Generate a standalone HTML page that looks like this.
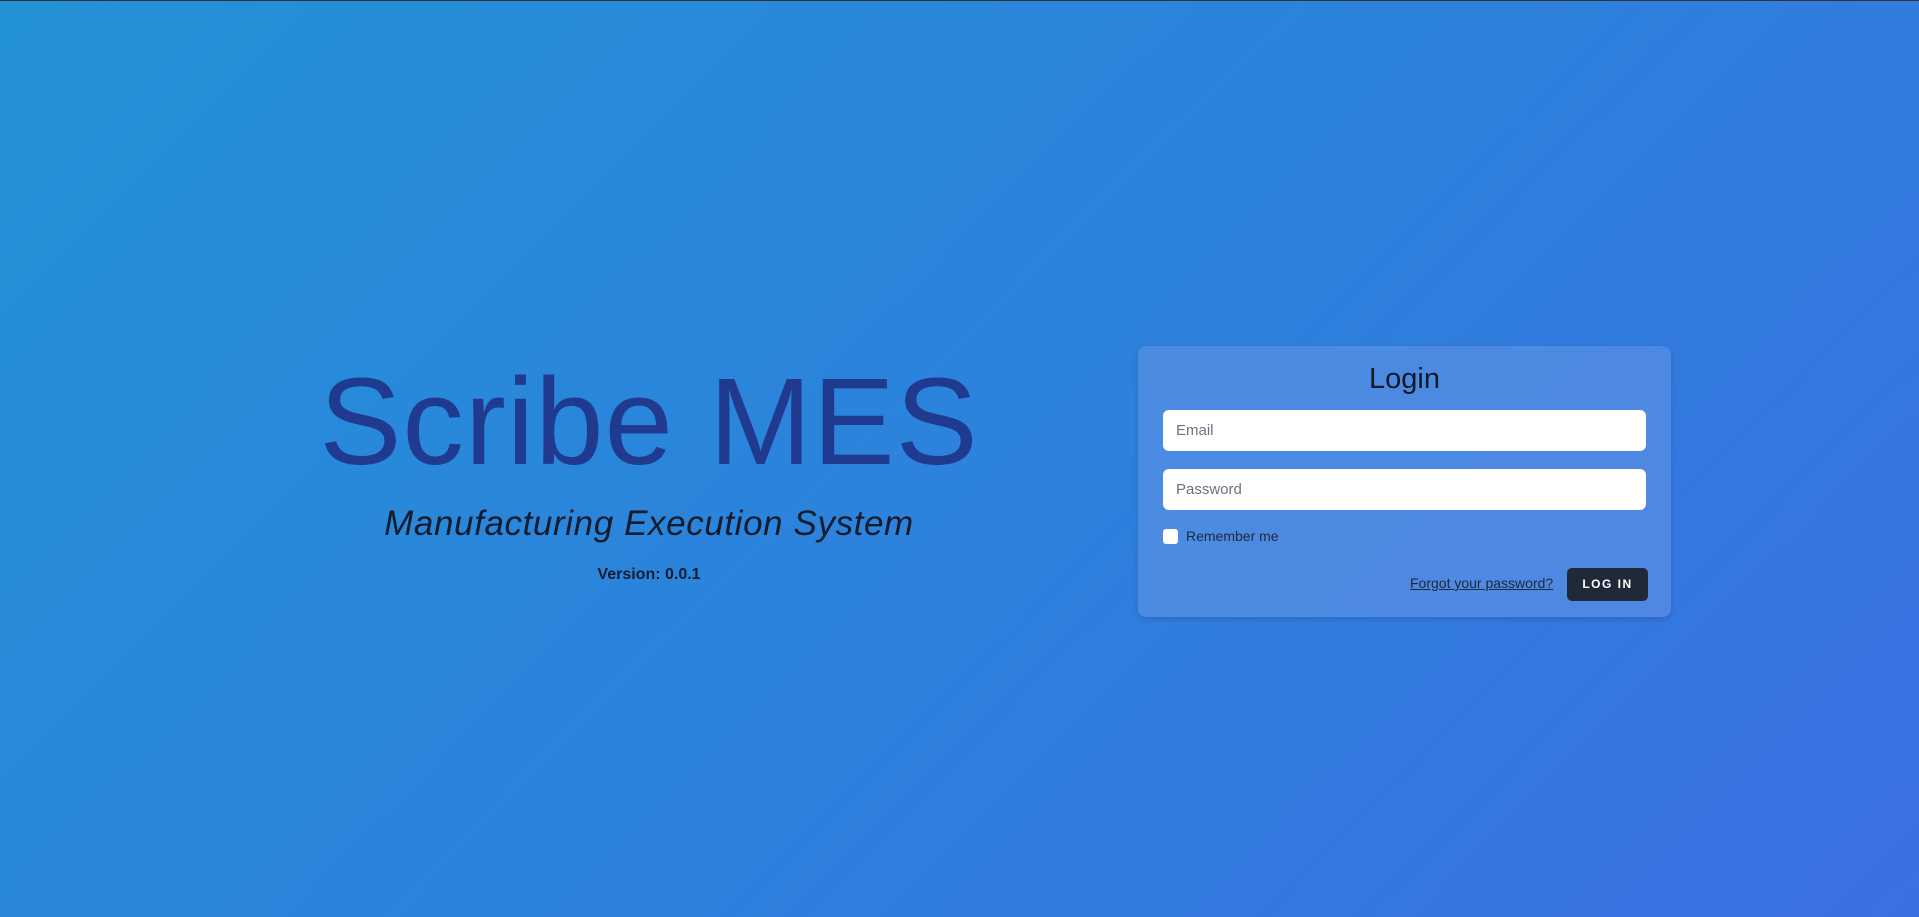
<!DOCTYPE html>
<html><head><meta charset="utf-8"><style>
html,body{margin:0;padding:0}
body{width:1919px;height:917px;overflow:hidden;position:relative;font-family:"Liberation Sans",sans-serif;
background:linear-gradient(135deg,#2392d7 0%,#2c82dc 50%,#3b70e2 100%);border-top:1px solid #333;box-sizing:border-box}
.t{position:absolute;left:0;width:1298px;text-align:center}
#title{top:352px;font-size:123px;color:#1f3a8f;line-height:140px;letter-spacing:1px}
#sub{top:503px;font-size:35px;font-style:italic;color:#141c2e;line-height:40px;letter-spacing:0.6px}
#ver{top:563px;font-size:16px;font-weight:bold;color:#141c2e;line-height:22px}
#card{position:absolute;left:1138px;top:345px;width:533px;height:271px;border-radius:8px;background:rgba(100,150,230,0.55);box-shadow:0 2px 6px rgba(0,0,0,0.15)}
#login{position:absolute;left:0;width:100%;top:17px;text-align:center;font-size:29px;color:#111827}
.in{position:absolute;left:25px;width:483px;height:41px;background:#fff;border-radius:6px;font-size:15px;color:#6b7280;line-height:41px;padding-left:13px;box-sizing:border-box}
#cb{position:absolute;left:25px;top:183px;width:15px;height:15px;background:#fff;border-radius:3px}
#rem{position:absolute;left:48px;top:182px;font-size:14px;color:#1f2937}
#fg{position:absolute;left:272px;top:229px;font-size:14px;color:#1f2937;text-decoration:underline}
#btn{position:absolute;left:429px;top:222px;width:81px;height:33px;background:#1f2937;border-radius:5px;color:#fff;font-size:12px;font-weight:bold;letter-spacing:1.5px;text-align:center;line-height:33px}
</style></head><body>
<div class="t" id="title">Scribe MES</div>
<div class="t" id="sub">Manufacturing Execution System</div>
<div class="t" id="ver">Version: 0.0.1</div>
<div id="card">
<div id="login">Login</div>
<div class="in" style="top:64px">Email</div>
<div class="in" style="top:123px">Password</div>
<div id="cb"></div>
<div id="rem">Remember me</div>
<div id="fg">Forgot your password?</div>
<div id="btn">LOG IN</div>
</div>
</body></html>
